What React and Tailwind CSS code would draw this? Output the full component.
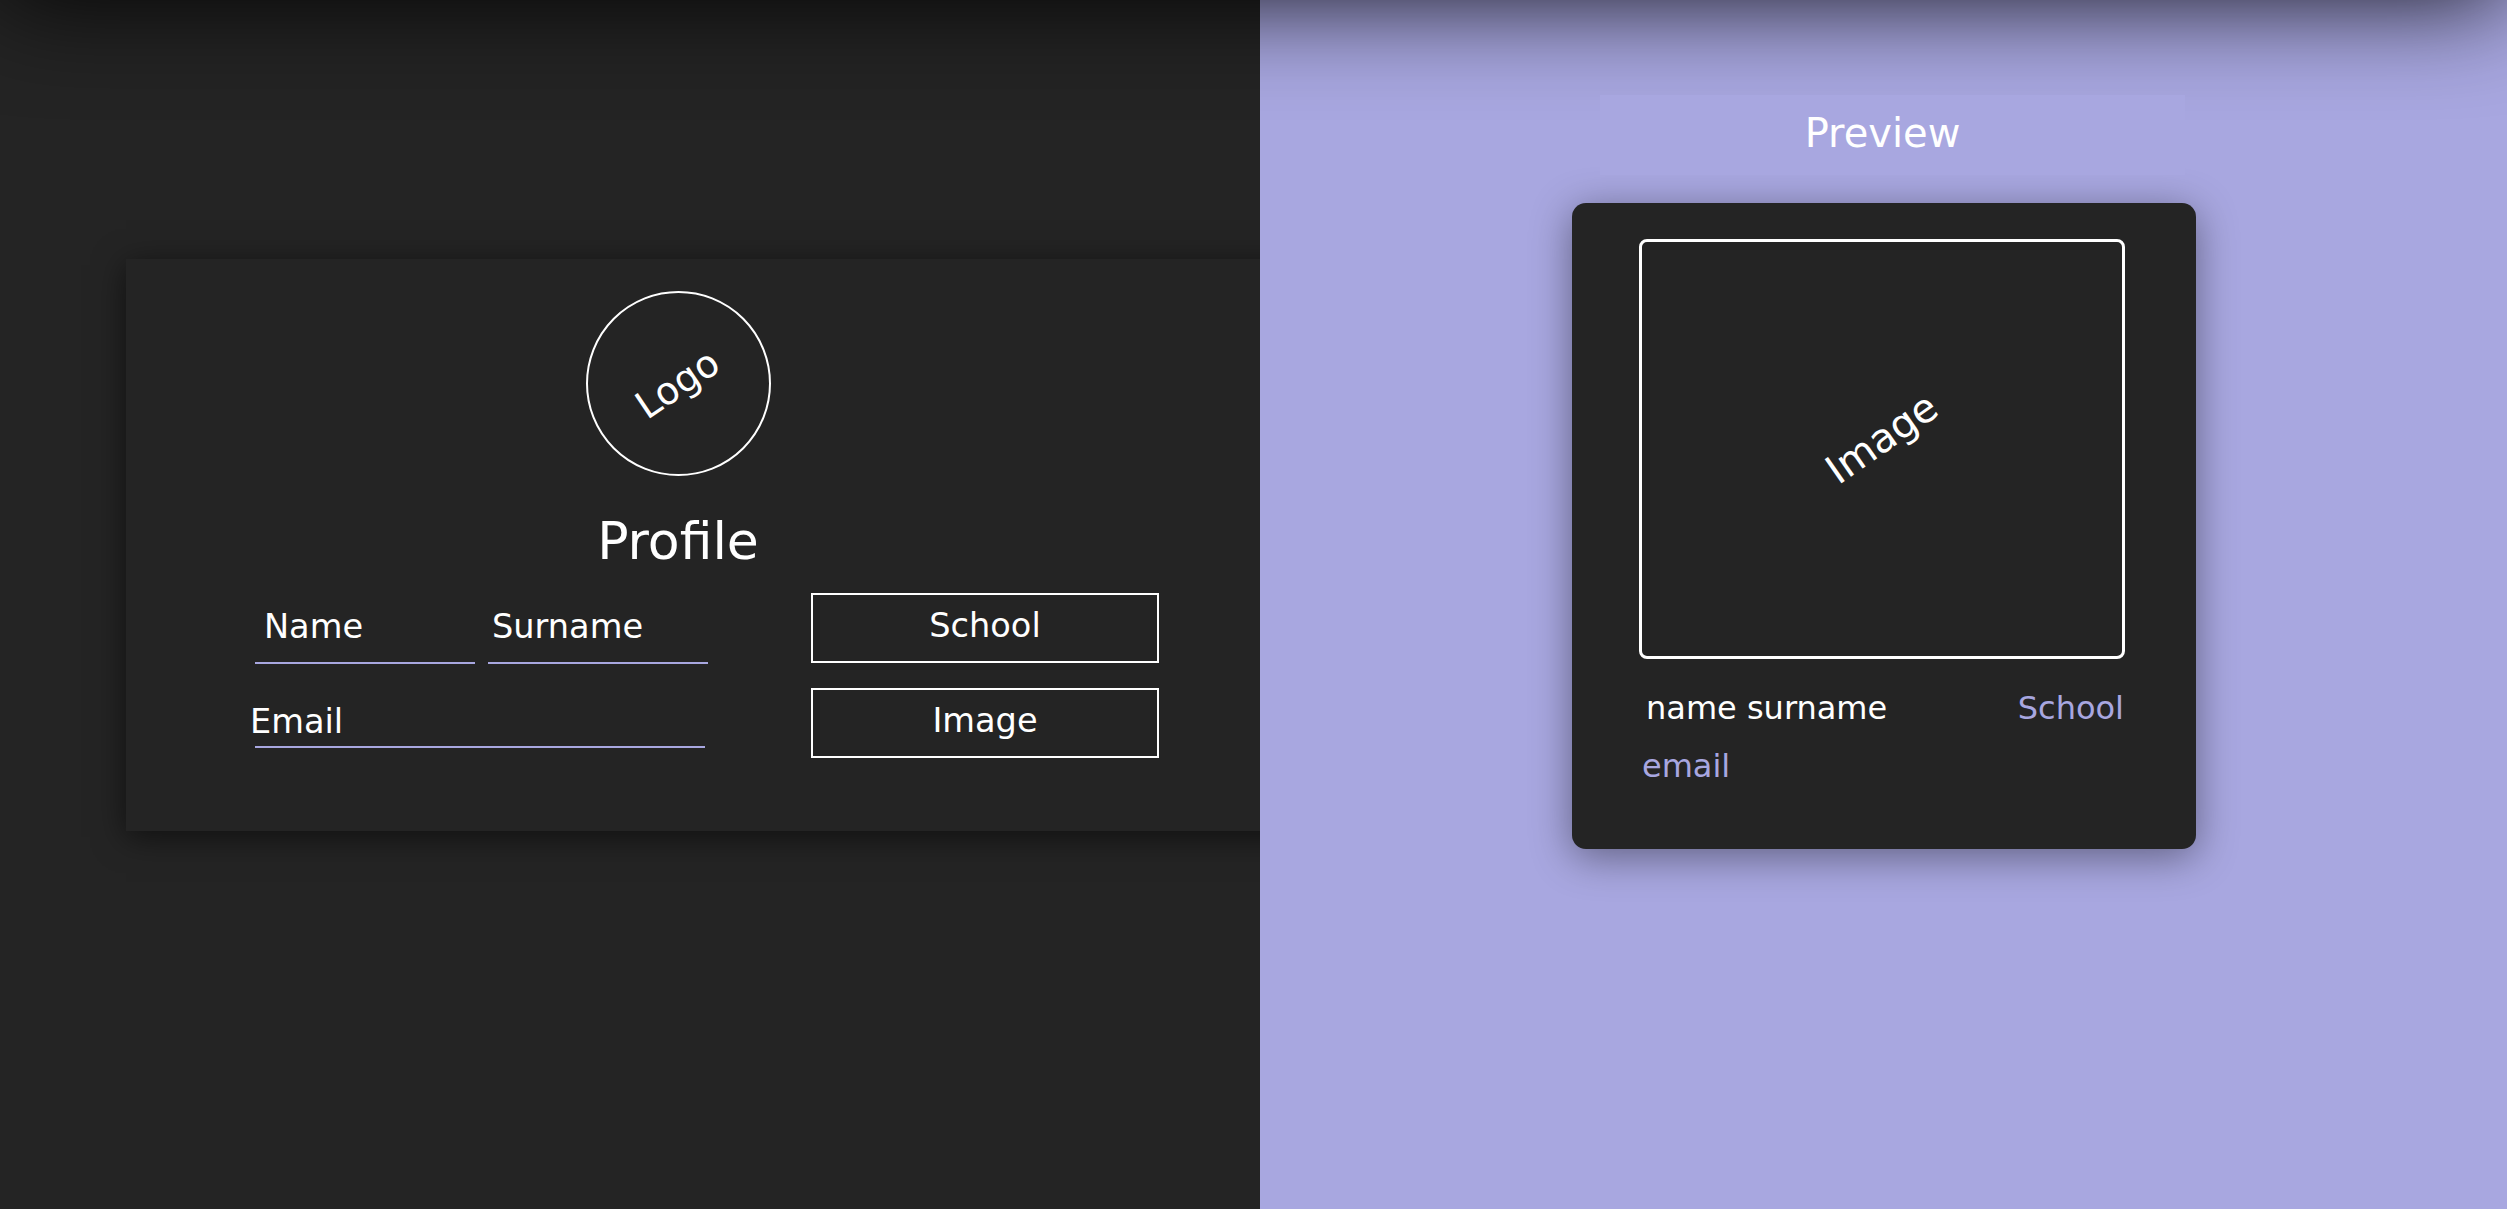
export default function App() {
  return (
    <div className="relative flex h-screen w-full overflow-hidden font-['DejaVu_Sans','Verdana',sans-serif] text-white">
      {/* shadow cast from an element just above the viewport */}
      <div className="absolute left-0 right-0 -top-[200px] z-10 h-[200px] shadow-[0_0_100px_rgba(0,0,0,0.9)]" />

      {/* Left: form */}
      <section className="w-[1260px] flex-none overflow-hidden bg-[#242424] pt-[259px]">
        <div className="ml-[126px] h-[572px] w-[1200px] bg-[#242424] shadow-[0_6px_30px_rgba(0,0,0,0.55)]">
          <div className="flex w-[1104px] flex-col items-center pt-[32px]">
            <div className="flex h-[185px] w-[185px] items-center justify-center rounded-full border-2 border-white">
              <span className="-rotate-[34deg] text-[38px] leading-none">Logo</span>
            </div>
            <h1 className="mt-[36px] text-[52px] font-normal leading-[59px]">Profile</h1>

            <form className="ml-[129px] mt-[22px] flex gap-[103px] self-start">
              <div className="w-[453px]">
                <div className="flex gap-[13px]">
                  <div className="h-[71px] w-[220px] border-b-2 border-[#a8a7e0] pl-[9px] pt-[14px] text-[33.6px] leading-[39px]">
                    Name
                  </div>
                  <div className="h-[71px] w-[220px] border-b-2 border-[#a8a7e0] pl-[4px] pt-[14px] text-[33.6px] leading-[39px]">
                    Surname
                  </div>
                </div>
                <div className="mt-[24px] h-[60px] w-[450px] border-b-2 border-[#a8a7e0] pt-[14px] text-[33.6px] leading-[39px]">
                  <span className="-ml-[5px] block">Email</span>
                </div>
              </div>
              <div className="w-[348px]">
                <button
                  type="button"
                  className="flex h-[70px] w-full items-center justify-center border-2 border-white pb-[5px] text-[33.6px] leading-[39px]"
                >
                  School
                </button>
                <button
                  type="button"
                  className="mt-[25px] flex h-[70px] w-full items-center justify-center border-2 border-white pb-[5px] text-[33.6px] leading-[39px]"
                >
                  Image
                </button>
              </div>
            </form>
          </div>
        </div>
      </section>

      {/* Right: preview */}
      <section className="flex-1 bg-[#a8a7e0] pt-[95px]">
        <div className="relative z-20 ml-[340px] flex h-[80px] w-[585px] items-center justify-center bg-[#a8a7e0] pb-[4px] pr-[20px] text-[40px] leading-[46px]">
          Preview
        </div>
        <div className="ml-[312px] mt-[28px] h-[646px] w-[624px] rounded-[14px] bg-[#242424] pl-[67px] pt-[36px] shadow-[0_8px_40px_rgba(0,0,0,0.42)]">
          <div className="flex h-[420px] w-[486px] items-center justify-center rounded-[8px] border-[3px] border-white pb-[22px]">
            <span className="-rotate-[35deg] text-[40px] leading-none">Image</span>
          </div>
          <div className="mt-[31px] flex w-[486px] justify-between pl-[7px] pr-[1px] text-[32px] leading-[37px]">
            <span>name surname</span>
            <span className="text-[#a8a7e0]">School</span>
          </div>
          <div className="mt-[21px] pl-[3px] text-[32px] leading-[37px] text-[#a8a7e0]">email</div>
        </div>
      </section>
    </div>
  );
}
